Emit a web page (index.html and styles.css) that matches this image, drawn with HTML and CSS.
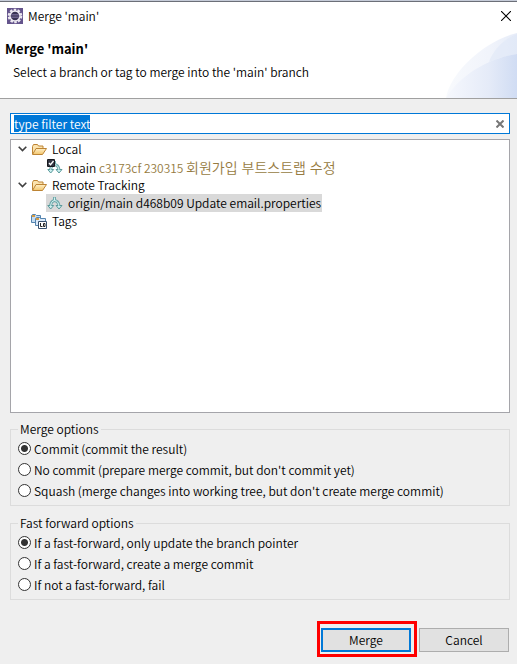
FILE: index.html
```html
<!DOCTYPE html>
<html lang="en">
<head>
<meta charset="utf-8">
<title>Merge 'main'</title>
<link rel="stylesheet" href="styles.css">
</head>
<body>
<svg class="defs" aria-hidden="true">
  <defs>
    <linearGradient id="folderFill" x1="0" y1="0" x2="0" y2="1"><stop offset="0" stop-color="#fff0c8"/><stop offset="1" stop-color="#f2c56c"/></linearGradient>
    <linearGradient id="glowOuter" x1="0" y1="0" x2="1" y2="0"><stop offset="0" stop-color="#f8fafd"/><stop offset=".6" stop-color="#f1f4fb"/><stop offset="1" stop-color="#e6ecf8"/></linearGradient>
    <linearGradient id="glowInner" x1="0" y1="0" x2="1" y2="0"><stop offset="0" stop-color="#f6f8fd"/><stop offset=".6" stop-color="#e5ebf8"/><stop offset="1" stop-color="#d0dcf3"/></linearGradient>
    <symbol id="folder" viewBox="0 0 16 16">
      <path d="M1.500 13V5.500l1-2h4l1 1.500h4.500v3" fill="#fbe3ae" stroke="#bd8434"/>
      <path d="M1.500 13.500L5 7.500h10.500l-4 6z" fill="url(#folderFill)" stroke="#bd8434"/>
    </symbol>
    <symbol id="branch" viewBox="0 0 16 16">
      <path d="M7.500 2v3.500Q4 6 3.500 11M7.500 5.500Q11.500 6 12 11" fill="none" stroke="#6fa9aa" stroke-width="3"/>
      <path d="M.8 10.500h5.900L3.700 14zM9 10.500h6L12 14z" fill="#c9eeee" stroke="#5b9a9b"/>
      <path d="M7.500 2.500v3Q4 6 3.600 11.500M7.500 5.500Q11.500 6 12 11.500" fill="none" stroke="#d5f4f4"/>
    </symbol>
  </defs>
</svg>
<main class="dialog">
  <header class="banner">
    <div class="titlebar">
      <svg class="icon" viewBox="0 0 16 16" aria-hidden="true">
        <rect width="16" height="16" fill="#64548c"/>
        <circle cx="8" cy="8" r="6.300" fill="none" stroke="#eeeaf2" stroke-width="2" stroke-dasharray="2.500 1.450"/>
        <circle cx="8" cy="8" r="5" fill="#393253" stroke="#f2eff5" stroke-width="1.500"/>
        <path d="M4 6.500h8M3.500 8h9M4 9.500h8" stroke="#8175a2" stroke-width=".7"/>
      </svg>
      <span class="caption">Merge 'main'</span>
      <button class="close" type="button" aria-label="Close">
        <svg viewBox="0 0 10 10" aria-hidden="true"><path d="M0 0l10 10M10 0L0 10" stroke="#000" stroke-width="1.100"/></svg>
      </button>
    </div>
    <h1>Merge 'main'</h1>
    <p>Select a branch or tag to merge into the 'main' branch</p>
    <svg class="glow" viewBox="0 0 71 66" aria-hidden="true">
      <path d="M0 66C4 41 38 9 71 1v65z" fill="url(#glowOuter)"/>
      <path d="M0 66C12 46 39 27 71 22v44z" fill="url(#glowInner)"/>
      <path d="M43 30C48 17 58 7 71 2v20Q57 24 43 30z" fill="#dfe8f7" opacity=".6"/>
    </svg>
  </header>

  <form class="content">
    <div class="filter">
      <span class="field"><input type="text" value="type filter text" aria-label="Filter" autofocus></span>
      <button class="clear" type="button" aria-label="Clear">
        <svg viewBox="0 0 8 8" aria-hidden="true"><path d="M.5.500l7 7M7.500.500l-7 7" stroke="#777" stroke-width="2"/></svg>
      </button>
    </div>

    <ul class="tree" role="tree">
      <li role="treeitem" aria-expanded="true">
        <div class="row"><svg class="arrow" viewBox="0 0 9 6"><path d="M.7.800l3.800 3.800L8.300.800" fill="none" stroke="#404040" stroke-width="1.600"/></svg><svg class="icon"><use href="#folder"/></svg><span>Local</span></div>
        <ul role="group">
          <li class="row leaf" role="treeitem"><svg class="icon" viewBox="0 0 16 16"><use href="#branch"/><path d="M.500.500h7v7h-7z" fill="#fff" stroke="#17181d"/><path d="M1 1h6v6H1z" fill="#323642"/><path d="M2 4l1.500 1.700L6.500 2" fill="none" stroke="#fff" stroke-width="1.300"/></svg><span>main <span class="commit">c3173cf 230315 <span class="korean" lang="ko">회원가입 부트스트랩 수정</span></span></span></li>
        </ul>
      </li>
      <li role="treeitem" aria-expanded="true">
        <div class="row"><svg class="arrow" viewBox="0 0 9 6"><path d="M.7.800l3.800 3.800L8.300.800" fill="none" stroke="#404040" stroke-width="1.600"/></svg><svg class="icon"><use href="#folder"/></svg><span>Remote Tracking</span></div>
        <ul role="group">
          <li class="row leaf selected" role="treeitem" aria-selected="true"><svg class="icon"><use href="#branch"/></svg><span>origin/main d468b09 Update email.properties</span></li>
        </ul>
      </li>
      <li class="row tags" role="treeitem">
        <svg class="icon" viewBox="0 0 16 16">
          <path d="M.500 9.500v-7l1-1h3l1 1h4v7z" fill="#c4dcf2" stroke="#5484af"/>
          <path d="M4.500 12.500v-7l1-1h3l1 1h5v7z" fill="#dceafa" stroke="#5484af"/>
          <path d="M1 3h3M5 6h3" stroke="#d49a41" stroke-width="2"/>
          <path d="M7.500 8.500h8v7h-8z" fill="#fff" stroke="#38516f"/>
          <path d="M9.500 10v3.500h2M12.500 10.500h1.500v3h-1.500z" fill="none" stroke="#222"/>
        </svg><span>Tags</span>
      </li>
    </ul>

    <fieldset>
      <legend>Merge options</legend>
      <label><input type="radio" name="merge" checked>Commit (commit the result)</label>
      <label><input type="radio" name="merge">No commit (prepare merge commit, but don't commit yet)</label>
      <label><input type="radio" name="merge">Squash (merge changes into working tree, but don't create merge commit)</label>
    </fieldset>
    <fieldset>
      <legend>Fast forward options</legend>
      <label><input type="radio" name="forward" checked>If a fast-forward, only update the branch pointer</label>
      <label><input type="radio" name="forward">If a fast-forward, create a merge commit</label>
      <label><input type="radio" name="forward">If not a fast-forward, fail</label>
    </fieldset>

    <div class="actions">
      <span class="marked"><button class="primary" type="button">Merge</button></span>
      <button type="button">Cancel</button>
    </div>
  </form>
</main>
<script src="script.js"></script>
</body>
</html>
```
FILE: styles.css
```css
* { box-sizing: border-box; }

body {
  margin: 0;
  background: #efefef;
  color: #000;
  font: 350 12px/18px "Noto Sans CJK KR", "Noto Sans", sans-serif;
}

button, input { font: inherit; color: inherit; }
ul { list-style: none; margin: 0; padding: 0; }
svg { display: block; flex: none; }

.defs { position: absolute; width: 0; height: 0; }
.icon { width: 16px; height: 16px; }

.dialog { display: flex; flex-direction: column; min-height: 100vh; }

.banner {
  position: relative;
  height: 99px;
  background: #fff;
  border-top: 1px solid #c5cbd8;
  border-bottom: 1px solid #a0a0a0;
}
.titlebar { display: flex; align-items: center; height: 29px; padding: 0 6px 0 7px; border-top: 1px solid #6c6f78; }
.caption { flex: 1; margin-left: 5px; }
.close { display: flex; padding: 0; border: 0; background: none; }
.close svg { width: 10px; height: 10px; }
h1 { margin: 10px 5px 0; font-size: 13px; line-height: 18px; }
p { margin: 5px 13px 0; }
.glow { position: absolute; right: 0; bottom: 0; width: 71px; height: 66px; }

.content { display: flex; flex: 1; flex-direction: column; padding: 14px 7px 12px 10px; }

.filter {
  display: flex;
  align-items: center;
  height: 21px;
  padding: 0 5px 0 3px;
  background: #fff;
  border: 1px solid #0078d7;
}
.field { flex: 1; display: flex; }
.field input { width: 100%; height: 17px; padding: 0; border: 0; outline: 0; background: none; }
.field input::selection { background: #0078d7; color: #fff; }
.clear { display: flex; padding: 0; border: 0; background: none; }
.clear svg { width: 8px; height: 8px; }

.tree {
  flex: 1;
  min-height: 100px;
  margin: 5px 0 7px;
  padding: 0 7px;
  background: #fff;
  border: 1px solid #a5a5aa;
}
.row { display: flex; align-items: center; gap: 5px; height: 18px; white-space: nowrap; }
.arrow { width: 9px; height: 6px; margin-right: -1px; }
.leaf { width: max-content; margin-left: 28px; padding: 0 1px; }
.selected { background: #d9d9d9; }
.tags { padding-left: 13px; }
.commit { color: #967b41; }
.korean { font-size: 14px; }

fieldset {
  min-width: 0;
  margin: 0;
  padding: 0 7px 4px;
  border: 1px solid #dcdcdc;
}
fieldset + fieldset { margin-top: 8px; }
legend { padding: 0 2px; }
label { display: flex; align-items: center; gap: 3px; height: 21px; }
label input {
  appearance: none;
  width: 13px;
  height: 13px;
  margin: 0;
  background: #fff;
  border: 1px solid #333;
  border-radius: 50%;
}
label input:checked { background: radial-gradient(circle, #333 3px, #fff 4px); }

.actions { display: flex; justify-content: flex-end; gap: 8px; margin-top: 28px; padding-right: 1px; }
.actions button { display: block; width: 90px; height: 24px; padding: 0; background: #e1e1e1; border: 1px solid #adadad; }
.actions .primary { border: 2px solid #0078d7; }
.marked { position: relative; }
.marked::after {
  content: "";
  position: absolute;
  inset: -7px -6px -5px -4px;
  border: 3px solid #f00;
  pointer-events: none;
}
```
FILE: script.js
```js
const filter = document.querySelector(".field input");
filter.focus();
filter.select();
```
